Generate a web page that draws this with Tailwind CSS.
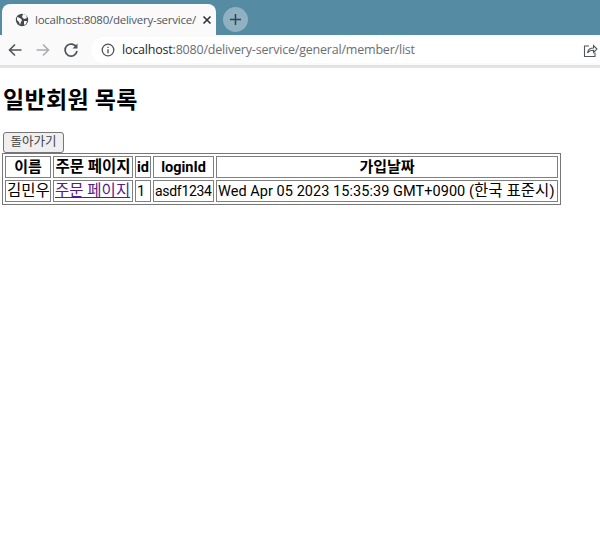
<!DOCTYPE html>
<html><head><meta charset="utf-8"><script src="https://cdn.jsdelivr.net/npm/@tailwindcss/browser@4"></script></head>
<body class="bg-white w-[600px] h-[538px] overflow-hidden font-['Roboto','Noto_Sans_CJK_KR',sans-serif] text-black">
<div class="h-[35px] bg-[#558ca3] flex items-end pl-[2px]">
  <div class="w-[214px] h-[31px] bg-[#fafafb] rounded-t-[8px] flex items-center pl-[13px] pr-[10px] gap-[6px]">
    <svg class="w-[14px] h-[14px] shrink-0" viewBox="0 0 14 14"><circle cx="7" cy="7" r="6.2" fill="#45494d"/><path d="M2 4l3 1 2 2-1 2-1 3-1-3-2-2zM8 1l3 1 1 3-3 1-2-2zM9 8l3 0-1 3-2 1z" fill="#fafafb"/></svg>
    <span class="text-[11.5px] leading-none text-[#50555a] font-['Open_Sans',sans-serif] whitespace-nowrap tracking-[-0.25px] flex-1">localhost:8080/delivery-service/</span>
    <svg class="w-[10px] h-[10px] shrink-0" viewBox="0 0 10 10"><path d="M1.5 1.5l7 7M8.5 1.5l-7 7" stroke="#2f3336" stroke-width="1.6"/></svg>
  </div>
  <div class="self-start ml-[7px] mt-[7px] w-[25px] h-[25px] rounded-full bg-[#8fb1c1] flex items-center justify-center">
    <svg class="w-[13px] h-[13px]" viewBox="0 0 13 13"><path d="M6.5 1v11M1 6.5h11" stroke="#2f4650" stroke-width="1.5"/></svg>
  </div>
</div>
<div class="h-[30px] bg-[#fafafb] flex items-center border-b-[3px] border-[#e3e3e3] box-content">
  <svg class="w-[16px] h-[16px] ml-[7px] shrink-0" viewBox="0 0 16 16"><path d="M14.500 8H2.500M8 2.500L2.500 8 8 13.500" fill="none" stroke="#50555a" stroke-width="1.6"/></svg>
  <svg class="w-[16px] h-[16px] ml-[12px] shrink-0" viewBox="0 0 16 16"><path d="M1.500 8h12M8 2.500L13.500 8 8 13.500" fill="none" stroke="#a9adb0" stroke-width="1.6"/></svg>
  <svg class="w-[16px] h-[16px] ml-[12px] shrink-0" viewBox="0 0 16 16"><path d="M13.500 5.500A6 6 0 1 0 14 9" fill="none" stroke="#50555a" stroke-width="1.7"/><path d="M14.500 1.500v5h-5z" fill="#50555a"/></svg>
  <div class="ml-[12px] flex-1 h-[26px] bg-white rounded-l-full flex items-center pl-[10px]">
    <svg class="w-[14px] h-[14px] shrink-0" viewBox="0 0 14 14"><circle cx="7" cy="7" r="5.800" fill="none" stroke="#50555a" stroke-width="1.3"/><path d="M7 6.200v4M7 3.700v1.300" stroke="#50555a" stroke-width="1.4"/></svg>
    <span class="ml-[7px] text-[12.5px] leading-none text-[#6a6e72] font-['Open_Sans',sans-serif] whitespace-nowrap tracking-[-0.2px]"><span class="text-[#24282c]">localhost</span>:8080/delivery-service/general/member/list</span>
    <svg class="w-[15px] h-[15px] ml-auto mr-[2px] shrink-0" viewBox="0 0 15 15"><path d="M6 3H1.500v10.500H12V9.500" fill="none" stroke="#50555a" stroke-width="1.1"/><path d="M4.500 10c.5-3.500 3-5 6-5V2.500L14 6l-3.500 3.500V7.300c-2.500 0-4.500.7-6 2.700z" fill="none" stroke="#50555a" stroke-width="1.1"/></svg>
  </div>
</div>
<main class="pl-[3px]">
  <h1 class="mt-[18px] text-[23px] leading-[30px] font-bold whitespace-nowrap tracking-[0.3px]">일반회원 목록</h1>
  <button class="mt-[16px] block h-[21px] w-[61px] bg-[#efefef] border border-[#767676] rounded-[3px] text-[12.5px] leading-none text-[#444]">돌아가기</button>
  <table class="ml-[-1px] table-fixed w-[559px] border-separate border-spacing-[2px] border border-[#767676] text-[14.5px] leading-[19px] whitespace-nowrap">
    <tbody>
      <tr class="h-[22px]">
        <th class="w-[46px] border border-[#808080] font-bold p-0 text-center text-[15px]">이름</th>
        <th class="w-[80px] border border-[#808080] font-bold p-0 text-center text-[15.500px]">주문 페이지</th>
        <th class="w-[16px] border border-[#808080] font-bold p-0 text-center">id</th>
        <th class="w-[61px] border border-[#808080] font-bold p-0 text-center">loginId</th>
        <th class="border border-[#808080] font-bold p-0 text-center text-[15px]">가입날짜</th>
      </tr>
      <tr class="h-[22px]">
        <td class="border border-[#808080] px-[1px] py-0 text-[15.500px]">김민우</td>
        <td class="border border-[#808080] px-[1px] py-0 text-[15.500px]"><a href="#" class="underline text-[#551a8b]">주문 페이지</a></td>
        <td class="border border-[#808080] px-[1px] py-0">1</td>
        <td class="border border-[#808080] px-[1px] py-0 text-[14px] tracking-[-0.3px]">asdf1234</td>
        <td class="border border-[#808080] px-[1px] py-0 tracking-[0.05px]">Wed Apr 05 2023 15:35:39 GMT+0900 (<span class="text-[15.500px]">한국 표준시</span>)</td>
      </tr>
    </tbody>
  </table>
</main>
</body></html>
